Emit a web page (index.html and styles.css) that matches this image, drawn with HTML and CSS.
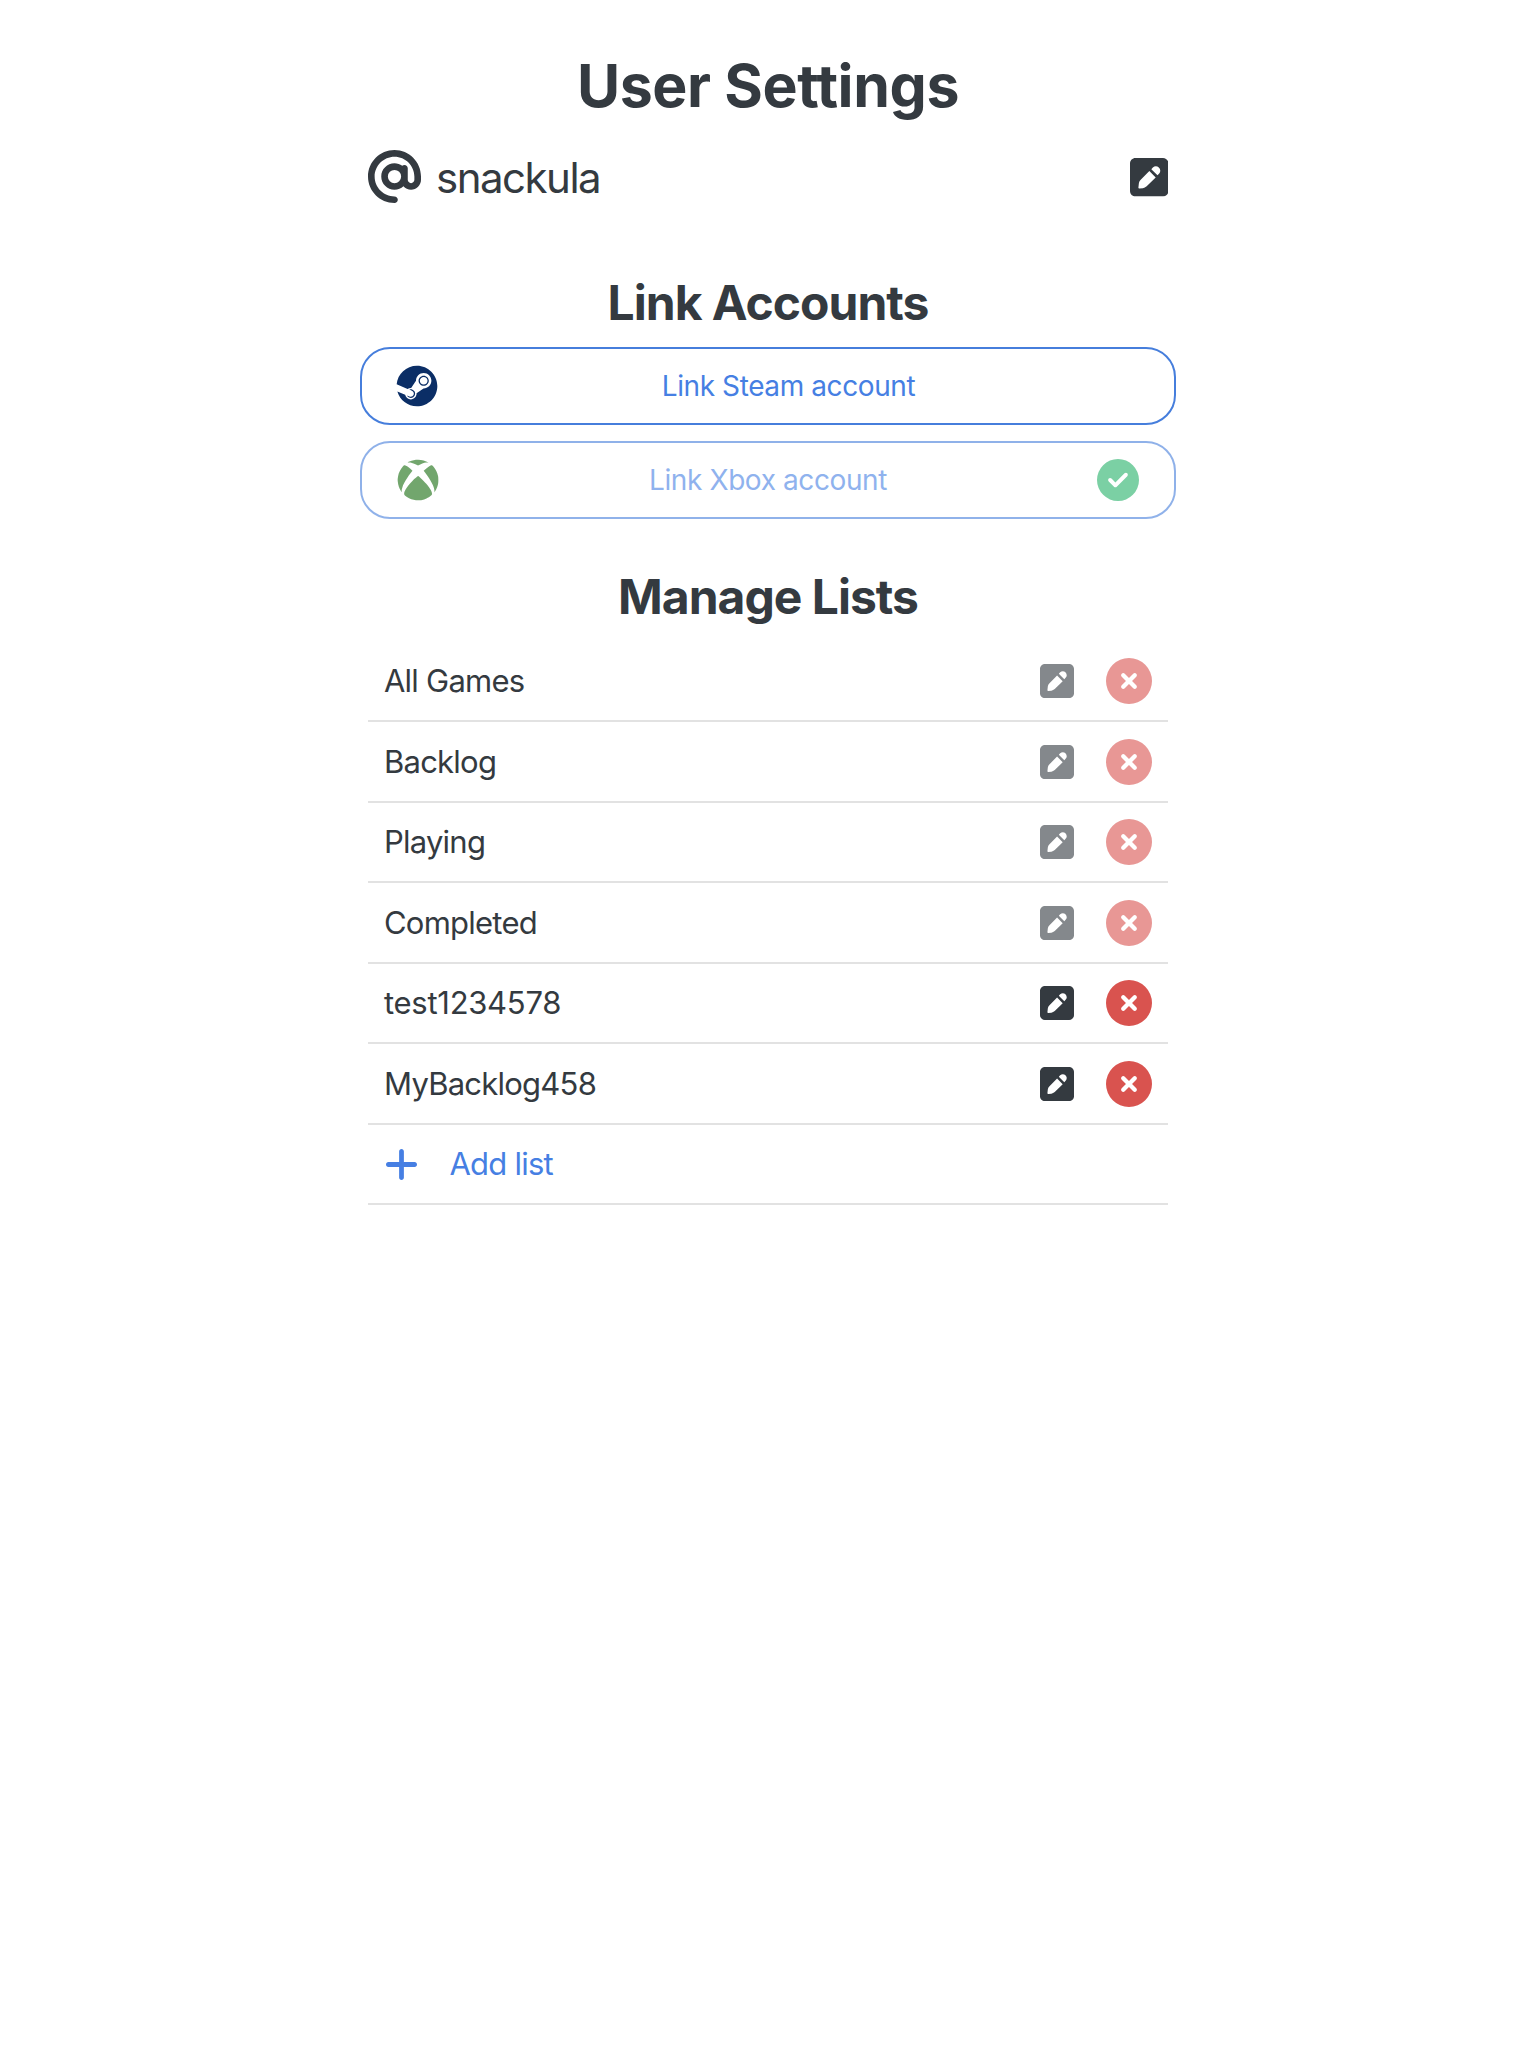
FILE: index.html
```html
<!DOCTYPE html>
<html lang="en">
<head>
<meta charset="utf-8">
<title>User Settings</title>
<link rel="stylesheet" href="styles.css">
</head>
<body>
<svg class="sprite" aria-hidden="true">
  <symbol id="at" viewBox="0 0 512 512"><path d="M256 64C150 64 64 150 64 256s86 192 192 192c17.7 0 32 14.3 32 32s-14.3 32-32 32C114.6 512 0 397.4 0 256S114.6 0 256 0S512 114.6 512 256l0 32c0 53-43 96-96 96c-29.3 0-55.6-13.2-73.2-33.9C320 371.1 289.5 384 256 384c-70.7 0-128-57.3-128-128s57.3-128 128-128c27.9 0 53.7 8.9 74.7 24.1c5.7-5 13.1-8.1 21.3-8.1c17.7 0 32 14.3 32 32l0 80 0 32c0 17.7 14.3 32 32 32s32-14.3 32-32l0-32c0-106-86-192-192-192zm64 192a64 64 0 1 0 -128 0 64 64 0 1 0 128 0z"/></symbol>
  <symbol id="pen" viewBox="0 32 448 448"><path fill-rule="evenodd" d="M64 32C28.7 32 0 60.7 0 96L0 416c0 35.3 28.7 64 64 64l320 0c35.3 0 64-28.7 64-64l0-320c0-35.3-28.7-64-64-64L64 32zM248 162L266 142C285 124 315 122 335 142C356 163 358 190 340 211L320 233ZM103 330C105 312 112 299 122 289L225 184L299 258L194 362C180 374 165 380 150 383L110 387C101 388 97 384 98 375Z"/></symbol>
  <symbol id="remove" viewBox="0 0 512 512"><path d="M256 512A256 256 0 1 0 256 0a256 256 0 1 0 0 512zM175 175c9.4-9.4 24.6-9.4 33.9 0l47 47 47-47c9.4-9.4 24.6-9.4 33.9 0s9.4 24.6 0 33.9l-47 47 47 47c9.4 9.4 9.4 24.6 0 33.9s-24.6 9.4-33.9 0l-47-47-47 47c-9.4 9.4-24.6 9.4-33.9 0s-9.4-24.6 0-33.9l47-47-47-47c-9.4-9.4-9.4-24.6 0-33.9z"/></symbol>
  <symbol id="check" viewBox="0 0 512 512"><path d="M256 512A256 256 0 1 0 256 0a256 256 0 1 0 0 512zM369 209L241 337c-9.4 9.4-24.6 9.4-33.9 0l-64-64c-9.4-9.4-9.4-24.6 0-33.9s24.6-9.4 33.9 0l47 47L335 175c9.4-9.4 24.6-9.4 33.9 0s9.4 24.6 0 33.9z"/></symbol>
  <symbol id="plus" viewBox="16 48 416 416"><path d="M256 80c0-17.7-14.3-32-32-32s-32 14.3-32 32l0 144L48 224c-17.7 0-32 14.3-32 32s14.3 32 32 32l144 0 0 144c0 17.7 14.3 32 32 32s32-14.3 32-32l0-144 144 0c17.7 0 32-14.3 32-32s-14.3-32-32-32l-144 0 0-144z"/></symbol>
  <symbol id="steam" viewBox="0 0 496 512"><path d="M496 256c0 137-111.2 248-248.4 248-113.8 0-209.6-76.3-239-180.4l95.2 39.3c6.4 32.1 34.9 56.4 68.9 56.4 39.2 0 71.9-32.4 70.2-73.5l84.5-60.2c52.1 1.3 95.8-40.9 95.8-93.5 0-51.6-42-93.5-93.7-93.5s-93.7 42-93.7 93.5v1.2L176.6 279c-15.5-.9-30.7 3.4-43.5 12.1L0 236.1C10.2 108.4 117.1 8 247.6 8 384.8 8 496 119 496 256zM155.7 384.3l-30.5-12.6a52.79 52.79 0 0 0 27.2 25.8c26.9 11.2 57.8-1.6 69-28.4 5.4-13 5.5-27.3.1-40.3-5.4-13-15.5-23.2-28.5-28.6-12.9-5.4-26.7-5.2-38.9-.6l31.5 13c19.8 8.2 29.2 30.9 20.9 50.7-8.3 19.9-31 29.2-50.8 21zm173.8-129.9c-34.4 0-62.4-28-62.4-62.3s28-62.3 62.4-62.3 62.4 28 62.4 62.3-27.9 62.3-62.4 62.3zm.1-15.6c25.9 0 46.9-21 46.9-46.8 0-25.9-21-46.8-46.9-46.8s-46.9 21-46.9 46.8c.1 25.8 21.1 46.8 46.9 46.8z"/></symbol>
  <symbol id="xbox" viewBox="0 0 512 512"><path d="M369.9 318.2c44.3 54.3 64.7 98.8 54.4 118.7-7.9 15.1-56.7 44.6-92.6 55.9-29.6 9.3-68.4 13.3-100.4 10.2-38.2-3.7-76.9-17.4-110.1-39C93.3 445.8 87 438.3 87 423.4c0-29.9 32.9-82.3 89.2-142.1 32-33.9 76.5-73.7 81.4-72.6 9.4 2.1 84.3 75.1 112.3 109.5zM188.6 143.8c-29.7-26.9-58.1-53.9-86.4-63.4-15.2-5.1-16.3-4.8-28.7 8.1-29.2 30.4-53.5 79.7-60.3 122.4-5.4 34.2-6.1 43.8-4.2 60.5 5.6 50.5 17.3 85.4 40.5 120.9 9.5 14.6 12.1 17.3 9.3 9.9-4.2-11-.3-37.5 9.5-64 14.3-39 53.9-112.9 120.3-194.4zm311.6 63.5C483.3 127.3 432.7 77 425.6 77c-7.3 0-24.2 6.5-36 13.9-23.3 14.5-41 31.4-64.3 52.8C367.7 197 427.5 283.1 448.2 346c6.8 20.7 9.7 41.1 7.4 52.3-1.7 8.5-1.7 8.5 1.4 4.6 6.1-7.7 19.9-31.3 25.4-43.5 7.4-16.2 15-40.2 18.6-58.7 4.3-22.5 3.9-70.8-.8-93.4zM141.3 43C189 40.5 251 77.5 255.6 78.4c.7.1 10.4-4.2 21.6-9.7 63.9-31.1 94-25.8 107.4-25.2-63.9-39.3-152.7-50-233.9-11.7-23.4 11.1-24 11.9-9.4 11.2z"/></symbol>
</svg>
<main class="settings">
  <h1 class="title">User Settings</h1>
  <div class="user">
    <svg class="icon-at"><use href="#at"/></svg>
    <span class="username">snackula</span>
    <svg class="icon-edit-user"><use href="#pen"/></svg>
  </div>

  <h2 class="heading heading-accounts">Link Accounts</h2>
  <div class="accounts">
    <button class="account">
      <svg class="brand steam"><use href="#steam"/></svg>
      <span class="account-label">Link Steam account</span>
    </button>
    <button class="account disabled">
      <svg class="brand xbox"><use href="#xbox"/></svg>
      <span class="account-label">Link Xbox account</span>
      <svg class="brand linked"><use href="#check"/></svg>
    </button>
  </div>

  <h2 class="heading heading-lists">Manage Lists</h2>
  <ul class="lists">
    <li class="row"><span class="name">All Games</span><svg class="edit disabled"><use href="#pen"/></svg><svg class="remove disabled"><use href="#remove"/></svg></li>
    <li class="row"><span class="name">Backlog</span><svg class="edit disabled"><use href="#pen"/></svg><svg class="remove disabled"><use href="#remove"/></svg></li>
    <li class="row"><span class="name">Playing</span><svg class="edit disabled"><use href="#pen"/></svg><svg class="remove disabled"><use href="#remove"/></svg></li>
    <li class="row"><span class="name">Completed</span><svg class="edit disabled"><use href="#pen"/></svg><svg class="remove disabled"><use href="#remove"/></svg></li>
    <li class="row"><span class="name numeric">test1234578</span><svg class="edit"><use href="#pen"/></svg><svg class="remove"><use href="#remove"/></svg></li>
    <li class="row"><span class="name">MyBacklog458</span><svg class="edit"><use href="#pen"/></svg><svg class="remove"><use href="#remove"/></svg></li>
    <li class="row add"><svg class="plus"><use href="#plus"/></svg><span class="name">Add list</span></li>
  </ul>
</main>
</body>
</html>
```
FILE: styles.css
```css
* { box-sizing: border-box; }

body {
  margin: 0;
  background: #fff;
  color: #343a40;
  font-family: Inter, "Liberation Sans", sans-serif;
}

svg { display: block; flex: none; fill: currentColor; }

.sprite { display: none; }

.settings {
  width: 816px;
  margin: 0 auto;
  padding-top: 55px;
}

.title {
  margin: 0 0 34px;
  font-size: 59px;
  font-weight: 700;
  line-height: 61px;
  letter-spacing: -0.4px;
  text-align: center;
}

.user {
  display: flex;
  align-items: center;
  height: 53px;
  padding: 0 8px;
}

.icon-at { width: 53px; height: 53px; }

.username {
  flex: 1;
  margin-left: 15px;
  padding-top: 2px;
  font-size: 42px;
  font-weight: 420;
  line-height: 51px;
  letter-spacing: -1.5px;
}

.icon-edit-user { width: 38.5px; height: 38.5px; margin-top: 1.5px; }

.heading {
  margin: 0 0 15px;
  font-size: 48px;
  font-weight: 700;
  line-height: 60px;
  letter-spacing: -1px;
  text-align: center;
}

.heading-accounts { margin: 70px 0 14px; }
.heading-lists { margin-top: 47.5px; }

.accounts {
  display: flex;
  flex-direction: column;
  gap: 16px;
}

.account {
  display: flex;
  align-items: center;
  height: 78px;
  padding: 0 35px;
  border: 2px solid #467edc;
  border-radius: 30px;
  background: none;
  color: #467fe3;
  font: inherit;
}

.account-label {
  flex: 1;
  font-size: 28px;
  font-weight: 430;
  line-height: 34px;
  letter-spacing: -0.4px;
  text-align: center;
}

.brand { width: 42px; height: 42px; }
.steam { margin-left: -1px; color: #0b2e66; }
.xbox { color: #166c0d; }
.linked { color: #25b169; }

.disabled { opacity: 0.6; }

.lists {
  margin: 0;
  padding: 0 8px;
  list-style: none;
}

.row {
  display: flex;
  align-items: center;
  height: 80.5px;
  padding: 0 16px;
  border-bottom: 2px solid #e2e2e2;
}

.name {
  margin-right: auto;
  padding-top: 1px;
  font-size: 31px;
  font-weight: 430;
  line-height: 38px;
  letter-spacing: -0.77px;
}

.numeric { letter-spacing: -0.28px; }

.edit { width: 34px; height: 34px; margin: 0.5px 32px 0 0; }
.remove { width: 46px; height: 46px; margin-top: 0.5px; color: #d9534f; }

.add { color: #467fe3; }
.plus { width: 31px; height: 31px; margin: 0.5px 33px 0 1.5px; }
```
